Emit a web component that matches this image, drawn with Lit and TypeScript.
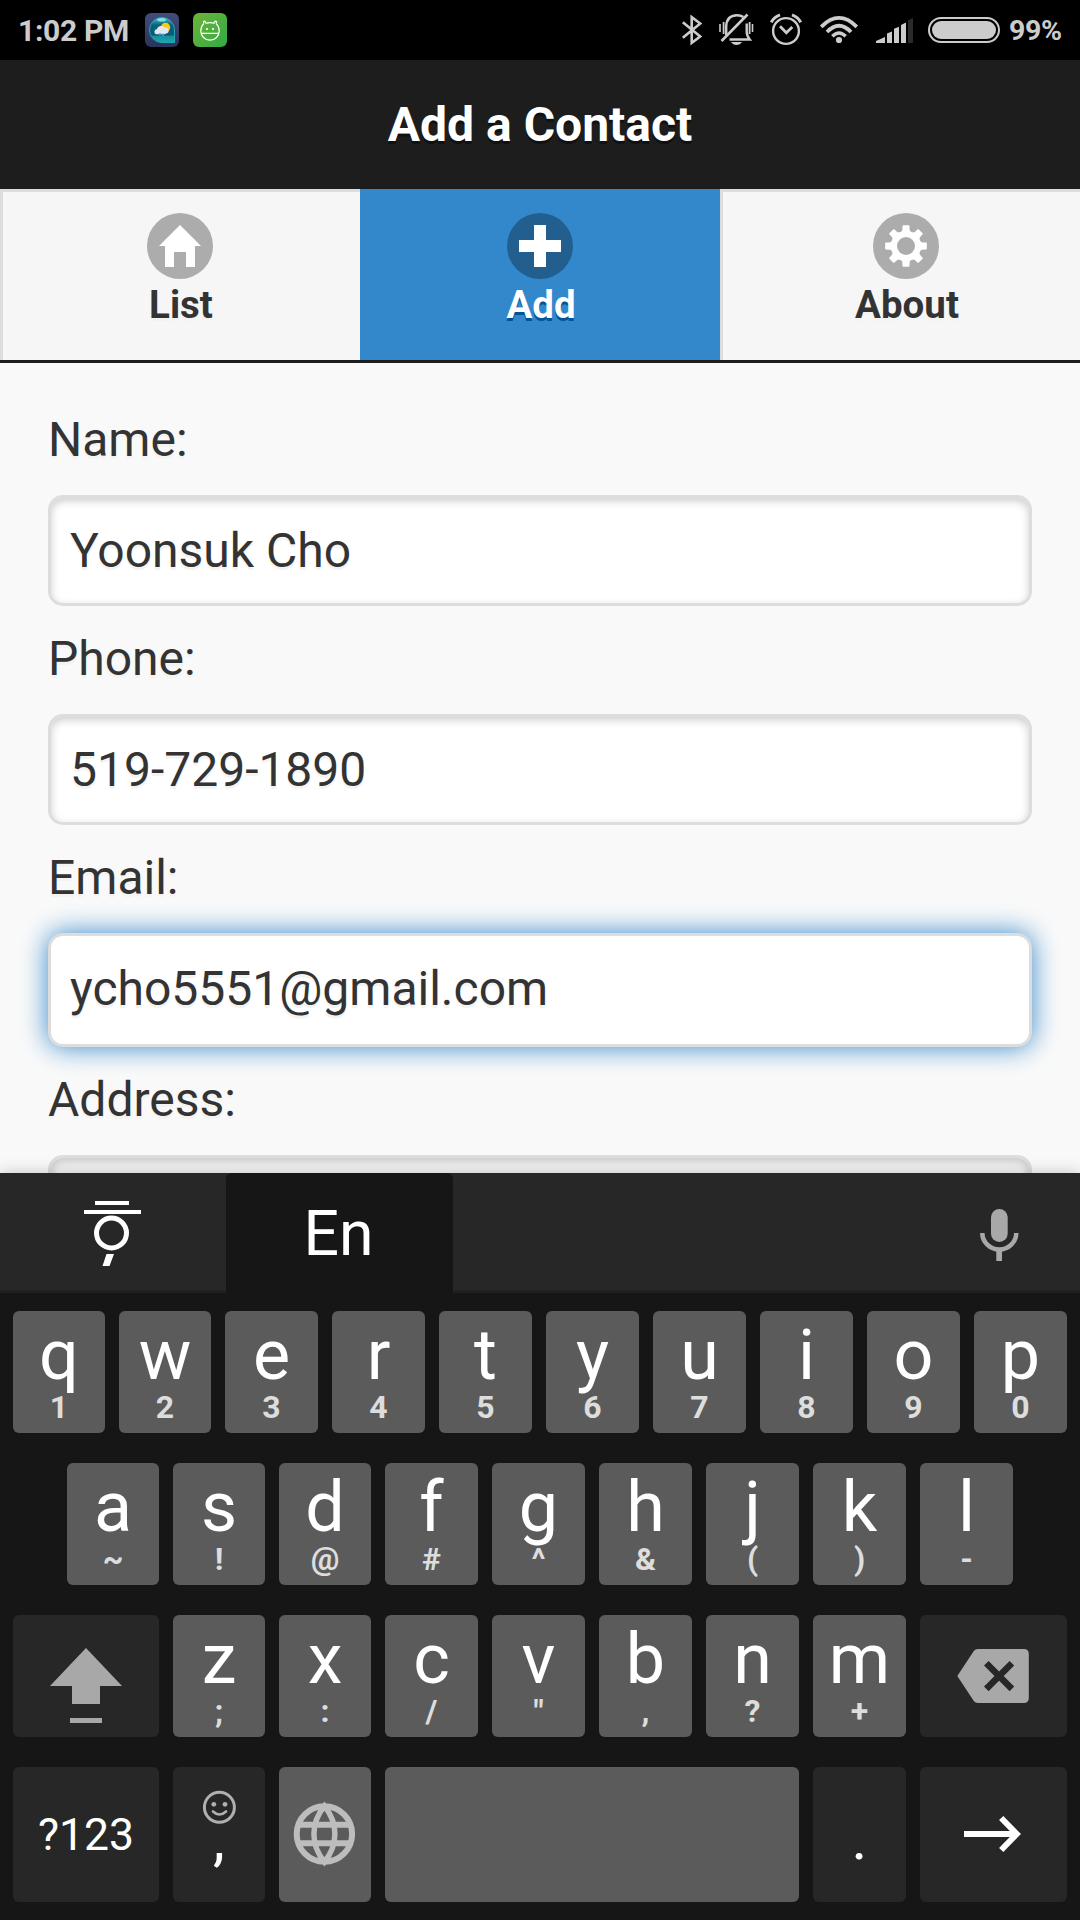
import { LitElement, html, svg, css, nothing, TemplateResult } from "lit";
import { customElement, property } from "lit/decorators.js";
import { classMap } from "lit/directives/class-map.js";

function gearPoints(cx: number, cy: number): string {
  const profile: Array<[number, number]> = [
    [-22.5, 14.2], [-14, 14.8], [-10.5, 16], [-7.5, 20.2], [7.5, 20.2], [10.5, 16], [14, 14.8],
  ];
  const out: string[] = [];
  for (let i = 0; i < 8; i++) {
    for (const [deg, r] of profile) {
      const a = ((i * 45 + deg) * Math.PI) / 180;
      out.push(`${(cx + r * Math.sin(a)).toFixed(2)},${(cy - r * Math.cos(a)).toFixed(2)}`);
    }
  }
  return out.join(" ");
}

@customElement("status-bar")
class StatusBar extends LitElement {
  static styles = css`
    :host { display: flex; align-items: center; height: 60px; background: #000; color: #ccc;
      padding: 0 19px 0 18px; box-sizing: border-box; font-weight: 700; }
    .time { font-size: 30px; line-height: 60px; width: 127px; white-space: nowrap; letter-spacing: -0.3px; padding-top: 1px; }
    .apps { display: block; flex: none; }
    .icons { display: block; margin-left: auto; flex: none; }
    .level { font-size: 28.5px; line-height: 60px; width: 52px; margin-left: 9px; white-space: nowrap; letter-spacing: -0.3px; padding-top: 1px; }
    svg { display: block; }
  `;

  render() {
    return html`
      <div class="time">1:02 PM</div>
      <svg class="apps" width="82" height="60" viewBox="145 0 82 60">
        <defs>
          <linearGradient id="navy" x1="0" y1="0" x2="0" y2="1">
            <stop offset="0" stop-color="#434d7c"></stop><stop offset="1" stop-color="#28345a"></stop>
          </linearGradient>
          <linearGradient id="sea" x1="0" y1="0" x2="0" y2="1">
            <stop offset="0" stop-color="#48c3c8"></stop><stop offset=".3" stop-color="#0d5f7c"></stop>
            <stop offset=".7" stop-color="#0a5876"></stop><stop offset=".75" stop-color="#178f9d"></stop>
            <stop offset="1" stop-color="#18a9ac"></stop>
          </linearGradient>
          <linearGradient id="leaf" x1="0" y1="0" x2="1" y2="1">
            <stop offset="0" stop-color="#6cb43a"></stop><stop offset="1" stop-color="#32ab42"></stop>
          </linearGradient>
        </defs>
        <rect x="145" y="13" width="34" height="34" rx="6" fill="url(#navy)"></rect>
        <path d="M162 17.500a12.500 12.500 0 0 1 12.500 12.500v12.500H162a12.500 12.500 0 0 1 0-25z" fill="url(#sea)" stroke="#1fa9b4" stroke-width="1"></path>
        <ellipse cx="161.500" cy="19.800" rx="4.500" ry="1.800" fill="#7be4de"></ellipse>
        <circle cx="165.500" cy="27.500" r="4.700" fill="#fcc81c"></circle>
        <path d="M156 34.200a2.600 2.600 0 0 1 .8-5 4.600 4.600 0 0 1 8-1.500 3 3 0 0 1 1.600 5.800l-2 .7z" fill="#e4e6ec"></path>
        <path d="M160 33v2.500M163 33.500v3" stroke="#38a8f4" stroke-width="1.400"></path>
        <rect x="193" y="13" width="34" height="34" rx="6" fill="url(#leaf)"></rect>
        <g fill="none" stroke="#fff" stroke-width="1.200">
          <path d="M203.800 23.600l-.3-1.800q.8-1.500 2 .2l.6 1.300q4-1.500 7.800 0l.6-1.300q1.200-1.700 2-.2l-.3 1.800"></path>
          <path d="M203.800 23.600q-3 2.800-3 7.400a9.200 9.200 0 0 0 18.400 0q0-4.600-3-7.400M201 33.300h18"></path>
        </g>
        <circle cx="207" cy="29" r="1.100" fill="#fff"></circle>
        <circle cx="213" cy="29" r="1.100" fill="#fff"></circle>
      </svg>
      <svg class="icons" width="320" height="60" viewBox="680 0 320 60" fill="none" stroke="#ccc">
        <path d="M682.800 22.300l17.400 14.200-8.500 6.300V17.200l8.500 6.300-17.400 14.200" stroke-width="2.600"></path>
        <g stroke-width="2.400">
          <path d="M726.200 35v-8q0-11.600 10.800-11.800 3.800 0 6.400 1.800M729.500 39.500h20.200q-3-3.500-3-8v-8"></path>
          <path d="M747.500 14.500L721.500 41" stroke-width="2.600"></path>
          <path d="M720 24v8M752.500 24v8" stroke-width="1.600"></path>
          <path d="M723.600 22v12M749.600 22v12" stroke-width="1.800"></path>
        </g>
        <path d="M731 42h11q-2 3-5.500 3t-5.500-3z" fill="#ccc" stroke="none"></path>
        <circle cx="786" cy="31" r="12.900" stroke-width="2.400"></circle>
        <path d="M780 26.300l6.300 6.400 6-5.800" stroke-width="2.800"></path>
        <path d="M771.300 22.300q2.500-5.300 8.700-7.500M800.700 22.300q-2.500-5.300-8.700-7.500" stroke-width="3"></path>
        <g stroke-width="3.800">
          <path d="M821.200 26.800q17.800-17.800 35.600 0"></path>
          <path d="M827 32q12-12.500 24 0"></path>
          <path d="M832.300 36.200q6.700-6.500 13.400 0" stroke-width="3.400"></path>
        </g>
        <circle cx="839" cy="40" r="3.100" fill="#ccc" stroke="none"></circle>
        <g fill="#ccc" stroke="none">
          <path d="M876 43v-2l9-4v6zM887 43V33.500l5-2V43zM894 43V28.700l5-2V43zM901 43V25l5-2.400V43z"></path>
          <path d="M908 43V20.500l5-2.500V43z" fill="#2b2b2b"></path>
        </g>
        <rect x="929" y="18" width="70" height="24" rx="12" stroke-width="2"></rect>
        <rect x="932" y="21" width="64" height="18" rx="9" fill="#ccc" stroke="none"></rect>
      </svg>
      <div class="level">99%</div>
    `;
  }
}

@customElement("nav-tab")
class NavTab extends LitElement {
  @property() label = "";
  @property() icon = "home";
  @property({ type: Boolean }) active = false;

  static styles = css`
    :host { display: block; }
    .tab { box-sizing: border-box; height: 171px; display: flex; flex-direction: column; align-items: center;
      border-top: 3px solid #ddd; border-left: 3px solid #ddd; background: #f6f6f6; color: #333;
      padding-top: 21px; text-shadow: 0 3px 0 #f3f3f3; }
    .first { padding-right: 3px; }
    .last { padding-left: 9px; }
    .active { background: #38c; border-color: #38c; color: #fff; text-shadow: 0 3px 0 #059; padding-right: 3px; }
    .disc { display: block; }
    .label { font-size: 38.5px; line-height: 51px; font-weight: 700; padding-left: 2px; }
  `;

  private glyph() {
    if (this.icon === "home")
      return svg`<polygon points="33,12 12,33 18,33 18,54 27,54 27,39 39,39 39,54 48,54 48,33 54,33" fill="#fff"></polygon>`;
    if (this.icon === "plus")
      return svg`<path d="M27 12h12v15h15v12H39v15H27V39H12V27h15z" fill="#fff"></path>`;
    return svg`<path fill="#fff" stroke="#fff" stroke-width="1.600" stroke-linejoin="round" d=${"M" + gearPoints(33, 33) + "Z"}></path>
      <circle cx="33" cy="33" r="9" fill="#acacac"></circle>`;
  }

  render() {
    const c = { tab: true, active: this.active, first: this.icon === "home", last: this.icon === "gear" };
    return html`<div class=${classMap(c)}>
      <svg class="disc" width="66" height="66" viewBox="0 0 66 66">
        <circle cx="33" cy="33" r="33" fill="#000" fill-opacity=".3"></circle>${this.glyph()}
      </svg>
      <div class="label">${this.label}</div>
    </div>`;
  }
}

@customElement("form-field")
class FormField extends LitElement {
  @property() label = "";
  @property() value = "";
  @property({ type: Boolean }) focused = false;

  static styles = css`
    :host { display: block; font-size: 48px; color: #333; text-shadow: 0 3px 0 #f3f3f3; margin-bottom: 17px; }
    .label { line-height: 72px; margin-bottom: 19px; }
    .box { box-sizing: border-box; height: 111px; border: 3px solid #ddd; border-radius: 15px; background: #fff;
      padding: 0 19px; line-height: 105px; box-shadow: inset 0 3px 9px rgba(0, 0, 0, 0.2); white-space: nowrap; }
    .focused { height: 114px; box-shadow: 0 0 27px #38c; }
    .empty { background: #f6f6f6; }
  `;

  render() {
    return html`<div class="label">${this.label}</div>
      <div class=${classMap({ box: true, focused: this.focused, empty: !this.value })}>${this.value}</div>`;
  }
}

interface Key {
  main?: string;
  hint?: string;
  kind?: "dark" | "light";
  art?: TemplateResult;
  style?: "symbols" | "mark";
}

const letters = (pairs: string): Key[] =>
  pairs.split(" ").map((p) => ({ main: p[0], hint: p[1] }));

const shiftArt = html`<svg width="146" height="122" viewBox="13 1615 146 122" fill="#a8a8a8">
  <path d="M86 1648l36 38h-22v18H72v-18H50zM70 1718h32v5H70z"></path></svg>`;
const eraseArt = html`<svg width="147" height="122" viewBox="920 1615 147 122">
  <path d="M957.300 1676l16.500-25q1.500-2 4-2h46q5 0 5 5v44q0 5-5 5h-46q-2.500 0-4-2z" fill="#a8a8a8"></path>
  <path d="M986.300 1663.300l25.600 25.600M1011.900 1663.300l-25.600 25.600" stroke="#272727" stroke-width="6.500"></path></svg>`;
const smileArt = html`<svg width="92" height="70" viewBox="173 1767 92 70" fill="none" stroke="#b0b0b0">
  <circle cx="219.400" cy="1807.300" r="15" stroke-width="3"></circle>
  <path d="M213 1811.500q6.500 6 13 0" stroke-width="2.600" stroke-linecap="round"></path>
  <circle cx="213.800" cy="1804.300" r="2.400" fill="#b0b0b0" stroke="none"></circle>
  <circle cx="225" cy="1804.300" r="2.400" fill="#b0b0b0" stroke="none"></circle></svg>`;
const globeArt = html`<svg width="92" height="135" viewBox="279 1767 92 135" fill="none" stroke="#bdbdbd" stroke-width="6">
  <circle cx="324.400" cy="1834" r="27.700"></circle>
  <path d="M299 1824.700h51M299 1843.200h51"></path>
  <path d="M324.400 1806q-10.500 13-10.500 28t10.500 28q10.500-13 10.500-28t-10.500-28z" stroke-width="5.500"></path></svg>`;
const arrowArt = html`<svg width="147" height="135" viewBox="920 1767 147 135" fill="none" stroke="#fff" stroke-width="6">
  <path d="M964 1834h52M1001.200 1818l15.600 16-15.600 16"></path></svg>`;

@customElement("soft-keyboard")
class SoftKeyboard extends LitElement {
  static styles = css`
    :host { display: block; background: #161616; color: #fff; box-shadow: 0 0 15px rgba(0, 0, 0, 0.22); }
    .strip { display: flex; height: 120px; background: #272727; box-shadow: inset 0 -3px 0 #212121; }
    .lang { width: 226px; }
    .current { width: 227px; background: #161616; border-radius: 6px 6px 0 0; text-align: center;
      font-size: 62.5px; line-height: 121px; box-sizing: border-box; padding-right: 2px; }
    .mic { margin-left: auto; }
    svg { display: block; }
    .keys { display: grid; row-gap: 30px; padding: 18px 13px; }
    .row { display: grid; column-gap: 14px; grid-auto-rows: 122px; }
    .top { grid-template-columns: 92px 92px repeat(8, 93px); }
    .home { grid-template-columns: 92px 92px 92px repeat(6, 93px); padding: 0 54px; }
    .lower { grid-template-columns: 146px 92px 92px repeat(5, 93px) 147px; }
    .bottom { grid-template-columns: 146px 92px 92px 414px 93px 147px; grid-auto-rows: 135px; }
    .key { background: #5b5b5b; border-radius: 6px; text-align: center; overflow: hidden; }
    .dark { background: #272727; }
    .main { font-size: 70px; line-height: 88px; }
    .hint { font-size: 32px; line-height: 16px; font-weight: 700; color: #ddd; }
    .symbols { font-size: 44.5px; line-height: 136px; }
    .mark { font-size: 60px; line-height: 144px; }
    .under { font-size: 60px; line-height: 4px; }
  `;

  private key(k: Key) {
    return html`<div class=${classMap({ key: true, dark: k.kind === "dark" })}>
      ${k.art ?? nothing}
      ${k.main ? html`<div class=${k.style ?? (k.art ? "under" : "main")}>${k.main}</div>` : nothing}
      ${k.hint ? html`<div class="hint">${k.hint}</div>` : nothing}
    </div>`;
  }

  render() {
    const rows: Array<[string, Key[]]> = [
      ["row top", letters("q1 w2 e3 r4 t5 y6 u7 i8 o9 p0")],
      ["row home", letters("a~ s! d@ f# g^ h& j( k) l-")],
      ["row lower", [{ kind: "dark", art: shiftArt }, ...letters('z; x: c/ v" b, n? m+'), { kind: "dark", art: eraseArt }]],
      ["row bottom", [
        { kind: "dark", main: "?123", style: "symbols" },
        { kind: "dark", art: smileArt, main: "," },
        { art: globeArt },
        {},
        { kind: "dark", main: ".", style: "mark" },
        { kind: "dark", art: arrowArt },
      ]],
    ];
    return html`
      <div class="strip">
        <svg class="lang" width="226" height="120" viewBox="0 1173 226 120" fill="#fff">
          <path d="M95 1201h34v4H95zM84 1210h57v4H84zM106.500 1254h7.500l-4.500 12h-7z"></path>
          <circle cx="111.500" cy="1233" r="15" fill="none" stroke="#fff" stroke-width="5"></circle>
        </svg>
        <div class="current">En</div>
        <svg class="mic" width="162" height="120" viewBox="918 1173 162 120" fill="#a8a8a8">
          <rect x="991" y="1209" width="16.700" height="33" rx="8.300"></rect>
          <path d="M982.300 1233a17 16.500 0 0 0 34 0" fill="none" stroke="#a8a8a8" stroke-width="4.600"></path>
          <rect x="996.300" y="1250" width="5.700" height="11"></rect>
        </svg>
      </div>
      <div class="keys">
        ${rows.map(([cls, keys]) => html`<div class=${cls}>${keys.map((k) => this.key(k))}</div>`)}
      </div>`;
  }
}

@customElement("app-root")
class AppRoot extends LitElement {
  static styles = css`
    :host { display: flex; flex-direction: column; width: 1080px; height: 1920px; overflow: hidden;
      background: #f9f9f9; font-family: Roboto, "Liberation Sans", sans-serif; }
    .title { height: 129px; background: #1d1d1d; color: #fff; text-align: center; font-size: 48px;
      line-height: 129px; font-weight: 700; text-shadow: 0 3px 0 #111; flex: none; }
    .tabs { display: grid; grid-template-columns: repeat(3, 360px); border-bottom: 3px solid #1d1d1d; flex: none; }
    .form { height: 810px; box-sizing: border-box; padding: 41px 48px 0; overflow: hidden; flex: none; }
    .keyboard { flex: 1; position: relative; }
    .status { flex: none; }
  `;

  render() {
    return html`
      <status-bar class="status"></status-bar>
      <div class="title">Add a Contact</div>
      <div class="tabs">
        <nav-tab label="List" icon="home"></nav-tab>
        <nav-tab label="Add" icon="plus" active></nav-tab>
        <nav-tab label="About" icon="gear"></nav-tab>
      </div>
      <div class="form">
        <form-field label="Name:" value="Yoonsuk Cho"></form-field>
        <form-field label="Phone:" value="519-729-1890"></form-field>
        <form-field label="Email:" value="ycho5551@gmail.com" focused></form-field>
        <form-field label="Address:"></form-field>
      </div>
      <soft-keyboard class="keyboard"></soft-keyboard>
    `;
  }
}
